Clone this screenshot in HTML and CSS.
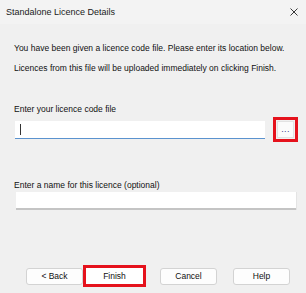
FILE: index.html
```html
<!DOCTYPE html>
<html>
<head>
<meta charset="utf-8">
<link rel="stylesheet" href="styles.css">
</head>
<body>
<div class="window">
  <div class="titlebar">
    <span class="title">Standalone Licence Details</span>
    <svg class="close" width="8" height="8" viewBox="0 0 8 8"><path d="M0.5 0.5 L7.5 7.5 M7.5 0.5 L0.5 7.5" stroke="#222" stroke-width="0.9" fill="none"/></svg>
  </div>
  <div class="content">
    <p class="line first">You have been given a licence code file. Please enter its location below.</p>
    <p class="line second">Licences from this file will be uploaded immediately on clicking Finish.</p>
    <p class="label label1">Enter your licence code file</p>
    <div class="filerow">
      <div class="input file"><span class="caret"></span></div>
      <div class="redbox browse-box"><div class="browse">...</div></div>
    </div>
    <p class="label label2">Enter a name for this licence (optional)</p>
    <div class="input name"></div>
  </div>
  <div class="buttons">
    <div class="btn back">&lt; Back</div>
    <div class="redbox finish-box"><div class="btn finish">Finish</div></div>
    <div class="btn cancel">Cancel</div>
    <div class="btn help">Help</div>
  </div>
</div>
</body>
</html>
```
FILE: styles.css
```css
html, body {
  margin: 0;
  padding: 0;
  background: #f0f0f0;
}
body {
  font-family: "Liberation Sans", Arial, sans-serif;
  font-size: 8.5px;
  color: #111;
  width: 306px;
  height: 293px;
  overflow: hidden;
}
.window {
  width: 306px;
  height: 293px;
  display: flex;
  flex-direction: column;
}
.titlebar {
  height: 24px;
  background: #f3f3f3;
  display: flex;
  align-items: center;
  justify-content: space-between;
  padding: 0 8px 0 6px;
  font-size: 9px;
  color: #1a1a1a;
}
.close {
  display: block;
}
.content {
  padding: 0 8px 0 14px;
}
.line, .label {
  margin: 0;
  line-height: 14px;
  height: 14px;
  white-space: nowrap;
}
.first { margin-top: 17px; }
.second { margin-top: 6px; }
.label1 { margin-top: 27px; }
.filerow {
  margin-top: 1px;
  display: flex;
  align-items: center;
}
.input {
  background: #fff;
  box-sizing: border-box;
  height: 18px;
}
.file {
  width: 250px;
  margin-left: 1px;
  border-bottom: 1px solid #5b93cf;
  position: relative;
}
.caret {
  position: absolute;
  left: 5px;
  top: 3px;
  width: 1px;
  height: 11px;
  background: #333;
}
.redbox {
  border: 3px solid #e5121c;
  box-sizing: border-box;
}
.browse-box {
  margin-left: 8px;
  width: 25px;
  height: 25px;
  padding: 1px;
}
.browse {
  box-sizing: border-box;
  width: 17px;
  height: 17px;
  background: #fbfbfb;
  border: 1px solid #e2e2e2;
  font-size: 9px;
  line-height: 15px;
  text-align: center;
  color: #3b3b8a;
  letter-spacing: 0.3px;
}
.label2 { margin-top: 36px; }
.name {
  margin-left: 2px;
  width: 280px;
  border-bottom: 2px solid #c4c4c4;
  box-shadow: 1px 0 0 #e4e4e4;
}
.buttons {
  margin-top: auto;
  margin-bottom: 6px;
  display: flex;
  align-items: center;
  padding-left: 26px;
}
.btn {
  box-sizing: border-box;
  width: 57px;
  height: 17px;
  background: #fdfdfd;
  border: 1px solid #d3d3d3;
  border-radius: 3px;
  text-align: center;
  line-height: 15px;
  font-size: 8.5px;
  color: #111;
}
.finish-box {
  width: 63px;
  height: 22px;
  padding: 0;
  display: flex;
  align-items: center;
  justify-content: center;
}
.finish {
  border-color: #fff;
  border-radius: 0;
  background: #fff;
  height: 16px;
  line-height: 14px;
}
.cancel { margin-left: 14px; }
.help { margin-left: 16px; }
```
